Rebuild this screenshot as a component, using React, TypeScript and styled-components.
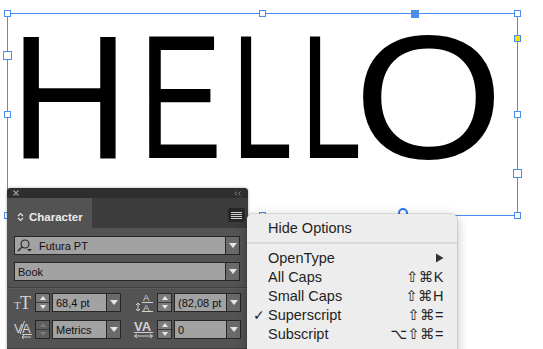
import React from 'react';
import styled, { createGlobalStyle } from 'styled-components';

const GlobalStyle = createGlobalStyle`
  html, body {
    margin: 0;
    padding: 0;
    background: #fff;
  }
  body {
    width: 543px;
    height: 349px;
    overflow: hidden;
    font-family: 'Liberation Sans', Arial, sans-serif;
  }
`;

const BLUE = '#4a8ff0';

const Canvas = styled.div`
  position: relative;
  width: 543px;
  height: 349px;
  overflow: hidden;
  background: #fff;
`;

const Frame = styled.div`
  position: absolute;
  left: 7px;
  top: 13px;
  width: 511px;
  height: 203px;
  box-sizing: border-box;
  border: 1px solid ${BLUE};
  padding: 13px 0 0 2px;
`;

const Word = styled.div`
  display: flex;
  font-family: 'Liberation Sans', Arial, sans-serif;
  font-size: 176px;
  line-height: 140px;
  color: #000;
`;

const Letter = styled.span<{ $w?: number; $sx: number }>`
  display: block;
  flex: none;
  width: ${(p) => (p.$w ? `${p.$w}px` : 'auto')};
  letter-spacing: -20px;
  transform: scaleX(${(p) => p.$sx});
  transform-origin: 0 0;
`;

const Handle = styled.div<{ $x: number; $y: number; $size?: number; $fill?: string }>`
  position: absolute;
  box-sizing: border-box;
  width: ${(p) => p.$size || 7}px;
  height: ${(p) => p.$size || 7}px;
  left: ${(p) => p.$x - Math.floor((p.$size || 7) / 2)}px;
  top: ${(p) => p.$y - Math.floor((p.$size || 7) / 2)}px;
  border: 1px solid ${BLUE};
  background: ${(p) => p.$fill || '#fff'};
`;

const Grabber = styled.div`
  position: absolute;
  left: 398px;
  top: 208px;
  width: 10px;
  height: 10px;
  box-sizing: border-box;
  border: 2px solid #2f7ae5;
  border-radius: 50%;
`;

/* ---------- Character panel ---------- */

const Panel = styled.div`
  position: absolute;
  left: 7px;
  top: 188px;
  width: 241px;
  height: 175px;
  background: #535353;
  border-radius: 4px 4px 0 0;
  overflow: hidden;
  box-shadow: 0 0 3px rgba(0, 0, 0, 0.35);
  display: flex;
  flex-direction: column;
  font-family: 'Liberation Sans', Arial, sans-serif;
`;

const TitleBar = styled.div`
  height: 10px;
  flex: none;
  background: #2e2e2e;
  display: flex;
  align-items: center;
  justify-content: space-between;
  padding: 0 7px 0 6px;
  overflow: hidden;
`;

const TabRow = styled.div`
  height: 30px;
  flex: none;
  background: #3c3c3c;
  display: flex;
  justify-content: space-between;
`;

const Tab = styled.div`
  width: 85px;
  box-sizing: border-box;
  background: #535353;
  display: flex;
  align-items: center;
  gap: 5px;
  padding: 7px 0 0 10px;
  color: #ececec;
  font-weight: bold;
  font-size: 11.5px;
`;

const MenuButton = styled.div`
  width: 17px;
  height: 14px;
  margin: 10px 3px 0 0;
  background: #272727;
  border-radius: 2px;
  display: flex;
  flex-direction: column;
  justify-content: center;
  align-items: center;
  gap: 1px;

  & > span {
    width: 11px;
    height: 1px;
    background: #d0d0d0;
  }
`;

const Body = styled.div`
  padding: 8px 8px 0 7px;
  display: flex;
  flex-direction: column;
`;

const Field = styled.div<{ $gap?: number }>`
  display: flex;
  align-items: stretch;
  height: 19px;
  box-sizing: border-box;
  border: 1px solid #262626;
  background: #a2a2a2;
  margin-top: ${(p) => p.$gap || 0}px;
  font-size: 11px;
  color: #111;
`;

const FieldText = styled.div<{ $pad?: number }>`
  flex: 1;
  display: flex;
  align-items: center;
  gap: 6px;
  padding-left: ${(p) => p.$pad ?? 3}px;
  overflow: hidden;
  white-space: nowrap;
`;

const DropBtn = styled.div`
  width: 13px;
  flex: none;
  background: #6a6a6a;
  border-left: 1px solid #262626;
  display: flex;
  align-items: center;
  justify-content: center;

  &::after {
    content: '';
    border-left: 4px solid transparent;
    border-right: 4px solid transparent;
    border-top: 5px solid #e6e6e6;
  }
`;

const Divider = styled.div<{ $top: number }>`
  height: 1px;
  margin: ${(p) => p.$top}px -8px 0 -7px;
  background: #404040;
  border-bottom: 1px solid #5c5c5c;
`;

const Row = styled.div<{ $gap: number }>`
  display: grid;
  grid-template-columns: 107px 108px;
  column-gap: 12px;
  margin-top: ${(p) => p.$gap}px;
`;

const Group = styled.div`
  display: flex;
  align-items: center;
  gap: 2px;
  height: 19px;
`;

const IconSlot = styled.div<{ $w: number }>`
  width: ${(p) => p.$w}px;
  flex: none;
  display: flex;
  align-items: center;
  justify-content: center;
`;

const Spinner = styled.div<{ $off?: boolean }>`
  width: 15px;
  height: 19px;
  flex: none;
  box-sizing: border-box;
  border: 1px solid #262626;
  background: ${(p) => (p.$off ? '#5e5e5e' : '#7b7b7b')};
  display: flex;
  flex-direction: column;

  & > span {
    flex: 1;
    display: flex;
    align-items: center;
    justify-content: center;
  }
  & > span:first-child {
    border-bottom: 1px solid #3c3c3c;
  }
  & > span:first-child::after {
    content: '';
    border-left: 3px solid transparent;
    border-right: 3px solid transparent;
    border-bottom: 4px solid ${(p) => (p.$off ? '#7c7c7c' : '#e8e8e8')};
  }
  & > span:last-child::after {
    content: '';
    border-left: 3px solid transparent;
    border-right: 3px solid transparent;
    border-top: 4px solid ${(p) => (p.$off ? '#7c7c7c' : '#e8e8e8')};
  }
`;

const NumField = styled(Field)`
  flex: 1;
  height: 19px;
`;

const Glyph = styled.svg`
  display: block;
  flex: none;
  overflow: visible;
`;

/* ---------- context menu ---------- */

const Menu = styled.div`
  position: absolute;
  left: 247px;
  top: 214px;
  width: 210px;
  height: 150px;
  box-sizing: border-box;
  padding-top: 4px;
  background: #ededed;
  border-radius: 5px;
  box-shadow: 0 3px 12px rgba(0, 0, 0, 0.28), 0 0 0 1px rgba(0, 0, 0, 0.09);
  font-family: 'Liberation Sans', 'DejaVu Sans', Arial, sans-serif;
  font-size: 14.5px;
  color: #1f1f1f;
`;

const Item = styled.div`
  display: grid;
  grid-template-columns: 21px 1fr auto;
  align-items: center;
  height: 19px;
  padding-right: 13px;
  white-space: nowrap;
`;

const Check = styled.span`
  padding-left: 6px;
  font-family: 'DejaVu Sans', sans-serif;
  font-size: 14px;
`;

const Keys = styled.span`
  font-family: 'Liberation Sans', 'DejaVu Sans', sans-serif;
  letter-spacing: 0.5px;
  text-align: right;
`;

const Separator = styled.div`
  height: 2px;
  background: #d9d9d9;
  margin: 5px 0 4px;
`;

const ICON = '#d2d2d2';

const CloseIcon = () => (
  <Glyph width="6" height="6" viewBox="0 0 6 6">
    <path d="M0.5 0.5 L5.5 5.5 M5.5 0.5 L0.5 5.5" stroke="#a0a0a0" strokeWidth="1.1" />
  </Glyph>
);

const CollapseIcon = () => (
  <Glyph width="7" height="5" viewBox="0 0 7 5">
    <path d="M3 0.5 L1 2.5 L3 4.5 M6.5 0.5 L4.5 2.5 L6.5 4.5" stroke="#8a8a8a" strokeWidth="0.9" fill="none" />
  </Glyph>
);

const SizeIcon = () => (
  <Glyph width="19" height="17" viewBox="0 0 19 17">
    <text x="0" y="15" fontSize="11" fontFamily="Liberation Serif, serif" fill={ICON}>T</text>
    <text x="6" y="15" fontSize="18" fontFamily="Liberation Serif, serif" fill={ICON}>T</text>
  </Glyph>
);

const KernIcon = () => (
  <Glyph width="19" height="19" viewBox="0 0 19 19">
    <text x="0" y="13" fontSize="13" fontFamily="Liberation Sans, sans-serif" fill={ICON}>V</text>
    <text x="8" y="13" fontSize="13" fontFamily="Liberation Sans, sans-serif" fill={ICON}>A</text>
    <line x1="6" y1="14" x2="10.5" y2="1" stroke={ICON} strokeWidth="1" />
    <line x1="8" y1="14.5" x2="18" y2="14.5" stroke={ICON} strokeWidth="1" />
    <path d="M17 17 H8 M10 15.3 L8 17 L10 18.7" stroke={ICON} strokeWidth="1" fill="none" />
  </Glyph>
);

const LeadIcon = () => (
  <Glyph width="22" height="19" viewBox="0 0 22 19">
    <text x="10" y="8" fontSize="9.5" fontFamily="Liberation Sans, sans-serif" fill={ICON}>A</text>
    <line x1="9" y1="9.5" x2="20" y2="9.5" stroke={ICON} strokeWidth="1" />
    <text x="10" y="18" fontSize="9.5" fontFamily="Liberation Sans, sans-serif" fill={ICON}>A</text>
    <line x1="9" y1="18.5" x2="20" y2="18.5" stroke={ICON} strokeWidth="1" />
    <path d="M5 10 V18 M3 12 L5 10 L7 12 M3 16 L5 18 L7 16" stroke={ICON} strokeWidth="1" fill="none" />
  </Glyph>
);

const TrackIcon = () => (
  <Glyph width="22" height="19" viewBox="0 0 22 19">
    <text x="1" y="11" fontSize="13" fontWeight="bold" fontFamily="Liberation Sans, sans-serif" fill={ICON}>VA</text>
    <line x1="1" y1="12.5" x2="20" y2="12.5" stroke={ICON} strokeWidth="1" />
    <path d="M1.5 16 H19.5 M4 14 L1.5 16 L4 18 M17 14 L19.5 16 L17 18" stroke={ICON} strokeWidth="1" fill="none" />
  </Glyph>
);

const SearchIcon = () => (
  <Glyph width="16" height="13" viewBox="0 0 16 13">
    <circle cx="8" cy="5" r="4" stroke="#2a2a2a" strokeWidth="1.2" fill="none" />
    <line x1="5" y1="8" x2="1" y2="12" stroke="#2a2a2a" strokeWidth="1.4" />
    <path d="M10 10 H15 L12.5 12.5 Z" fill="#2a2a2a" />
  </Glyph>
);

const TabChevrons = () => (
  <Glyph width="7" height="10" viewBox="0 0 7 10">
    <path d="M1 4 L3.5 1.5 L6 4 M1 6 L3.5 8.5 L6 6" stroke="#e6e6e6" strokeWidth="1.2" fill="none" />
  </Glyph>
);

const SubArrow = () => (
  <Glyph width="9" height="10" viewBox="0 0 9 10">
    <path d="M1 0.5 L8.5 5 L1 9.5 Z" fill="#333" />
  </Glyph>
);

const letters = [
  { ch: 'H', w: 129, sx: 0.937 },
  { ch: 'E', w: 93, sx: 0.706 },
  { ch: 'L', w: 69, sx: 0.62 },
  { ch: 'L', w: 53, sx: 0.62 },
  { ch: 'O', sx: 1.09 },
];

const handles = [
  { x: 7, y: 13 },
  { x: 262, y: 13 },
  { x: 517, y: 13 },
  { x: 415, y: 14, size: 8, fill: BLUE },
  { x: 517, y: 38, fill: '#ffde00' },
  { x: 7, y: 55, size: 9 },
  { x: 7, y: 114 },
  { x: 517, y: 114 },
  { x: 517, y: 173, size: 9 },
  { x: 7, y: 215 },
  { x: 262, y: 215 },
  { x: 517, y: 215 },
];

const menuItems = [
  { label: 'OpenType', arrow: true },
  { label: 'All Caps', keys: '⇧⌘K' },
  { label: 'Small Caps', keys: '⇧⌘H' },
  { label: 'Superscript', keys: '⇧⌘=', checked: true },
  { label: 'Subscript', keys: '⌥⇧⌘=' },
];

const App = () => {
  return (
    <Canvas>
      <GlobalStyle />
      <Frame>
        <Word>
          {letters.map((l, i) => (
            <Letter key={i} $w={l.w} $sx={l.sx}>
              {l.ch}
            </Letter>
          ))}
        </Word>
      </Frame>
      {handles.map((h, i) => (
        <Handle key={i} $x={h.x} $y={h.y} $size={h.size} $fill={h.fill} />
      ))}
      <Grabber />

      <Panel>
        <TitleBar>
          <CloseIcon />
          <CollapseIcon />
        </TitleBar>
        <TabRow>
          <Tab>
            <TabChevrons />
            Character
          </Tab>
          <MenuButton>
            <span />
            <span />
            <span />
            <span />
          </MenuButton>
        </TabRow>
        <Body>
          <Field>
            <FieldText $pad={2}>
              <SearchIcon />
              Futura PT
            </FieldText>
            <DropBtn />
          </Field>
          <Field $gap={7}>
            <FieldText>Book</FieldText>
            <DropBtn />
          </Field>
          <Divider $top={6} />
          <Row $gap={4}>
            <Group>
              <IconSlot $w={19}>
                <SizeIcon />
              </IconSlot>
              <Spinner>
                <span />
                <span />
              </Spinner>
              <NumField>
                <FieldText>68,4 pt</FieldText>
                <DropBtn />
              </NumField>
            </Group>
            <Group>
              <IconSlot $w={22}>
                <LeadIcon />
              </IconSlot>
              <Spinner>
                <span />
                <span />
              </Spinner>
              <NumField>
                <FieldText>(82,08 pt</FieldText>
                <DropBtn />
              </NumField>
            </Group>
          </Row>
          <Row $gap={8}>
            <Group>
              <IconSlot $w={19}>
                <KernIcon />
              </IconSlot>
              <Spinner $off>
                <span />
                <span />
              </Spinner>
              <NumField>
                <FieldText>Metrics</FieldText>
                <DropBtn />
              </NumField>
            </Group>
            <Group>
              <IconSlot $w={22}>
                <TrackIcon />
              </IconSlot>
              <Spinner>
                <span />
                <span />
              </Spinner>
              <NumField>
                <FieldText>0</FieldText>
                <DropBtn />
              </NumField>
            </Group>
          </Row>
          <Divider $top={9} />
        </Body>
      </Panel>

      <Menu>
        <Item>
          <span />
          <span>Hide Options</span>
          <span />
        </Item>
        <Separator />
        {menuItems.map((m) => (
          <Item key={m.label}>
            <Check>{m.checked ? '✓' : ''}</Check>
            <span>{m.label}</span>
            {m.arrow ? <SubArrow /> : <Keys>{m.keys}</Keys>}
          </Item>
        ))}
      </Menu>
    </Canvas>
  );
};

export default App;
